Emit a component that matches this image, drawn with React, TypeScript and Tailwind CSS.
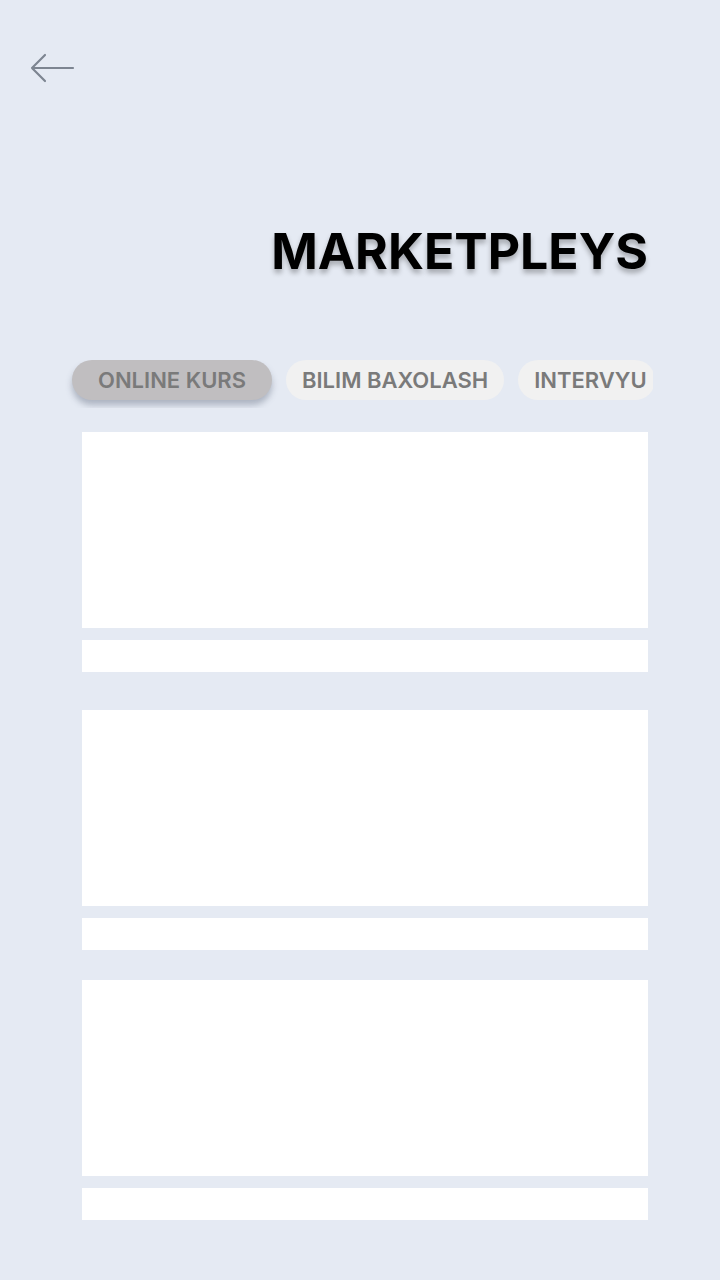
const tabs = ['ONLINE KURS', 'BILIM BAXOLASH', 'INTERVYU']

function BackArrow() {
  return (
    <svg width="46" height="30" viewBox="0 0 46 30" fill="none" className="text-[#7d8591]">
      <path d="M44 15H3M16 2L3 15l13 13" stroke="currentColor" strokeWidth="2.2" strokeLinecap="round" strokeLinejoin="round" />
    </svg>
  )
}

function CourseCard() {
  return (
    <div className="flex flex-col gap-3">
      <div className="h-[196px] bg-white" />
      <div className="h-8 bg-white" />
    </div>
  )
}

export default function App() {
  return (
    <div className="min-h-[1280px] bg-[#e5eaf3] font-['Inter',sans-serif]">
      <div className="pl-[29px] pt-[53px]">
        <BackArrow />
      </div>
      <h1 className="mt-[143px] pr-[72px] text-right text-[50px] leading-none font-bold text-black [text-shadow:0_4px_5px_rgba(0,0,0,0.28)]">
        MARKETPLEYS
      </h1>
      <div className="mt-[84px] mr-[67px] flex gap-[14px] overflow-hidden pb-2 pl-[72px]">
        {tabs.map((t, i) => (
          <button
            key={t}
            className={
              i === 0
                ? 'h-10 shrink-0 rounded-full bg-[#c0bec0] px-[26px] text-[22px] font-semibold text-[#7a7a7a] shadow-[0_5px_6px_rgba(90,100,120,0.4)]'
                : i === 1
                  ? 'h-10 shrink-0 rounded-full bg-[#f1f1f1] px-4 text-[22px] font-semibold text-[#7a7a7a]'
                  : 'h-10 shrink-0 rounded-full bg-[#f1f1f1] pl-4 pr-2 text-[22px] font-semibold text-[#7a7a7a]'
            }
          >
            {t}
          </button>
        ))}
      </div>
      <div className="ml-[82px] mr-[72px] mt-[24px] flex flex-col">
        <CourseCard />
        <div className="mt-[38px]">
          <CourseCard />
        </div>
        <div className="mt-[30px]">
          <CourseCard />
        </div>
      </div>
    </div>
  )
}
